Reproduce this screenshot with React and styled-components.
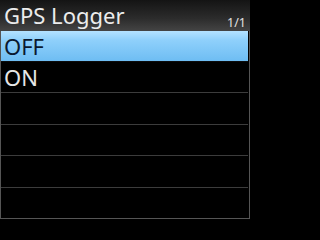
import React from 'react';
import styled, { createGlobalStyle } from 'styled-components';

const GlobalStyle = createGlobalStyle`
    html, body {
        margin: 0;
        padding: 0;
        background: #000;
    }
    body {
        font-family: 'Noto Sans', 'Open Sans', sans-serif;
    }
`;

const Screen = styled.div`
    width: 250px;
    height: 219px;
    background: #000;
    display: flex;
    flex-direction: column;
    overflow: hidden;
`;

const TitleBar = styled.div`
    height: 31px;
    display: flex;
    align-items: flex-end;
    justify-content: space-between;
    padding: 0 4px 0 4px;
    box-sizing: border-box;
    background: linear-gradient(#141414, #2c2c2c 60%, #444 100%);
`;

const Title = styled.div`
    font-size: 22px;
    line-height: 22px;
    color: #ececec;
    padding-bottom: 5px;
`;

const PageCount = styled.div`
    font-size: 12.5px;
    line-height: 12px;
    color: #e0e0e0;
    padding-bottom: 2px;
`;

const List = styled.div`
    flex: 1;
    display: flex;
    flex-direction: column;
    border-left: 1px solid #555;
    border-right: 1px solid #555;
    border-bottom: 1px solid #555;
    padding-right: 1px;
`;

// rows are 31px with a 1px rule, the picked one is the blue bar
const Row = styled.div`
    height: ${props => props.$h}px;
    box-sizing: border-box;
    display: flex;
    align-items: center;
    padding-left: 3px;
    font-size: 22px;
    color: ${props => props.$selected ? '#0a1930' : '#e6e6e6'};
    background: ${props => props.$selected
        ? 'linear-gradient(#b4e2ff, #8fd0fb 30%, #6ebdf3 100%)'
        : 'transparent'};
    border-bottom: 1px solid ${props => props.$selected ? '#0c0c0c' : '#3c3c3c'};
    &:last-child {
        border-bottom: none;
    }
`;

const rows = [
    { label: 'OFF', h: 31, selected: true },
    { label: 'ON', h: 31 },
    { label: '', h: 32 },
    { label: '', h: 31 },
    { label: '', h: 32 },
    { label: '', h: 30 },
];

export default function App() {
    return (
        <>
            <GlobalStyle />
            <Screen>
                <TitleBar>
                    <Title>GPS Logger</Title>
                    <PageCount>1/1</PageCount>
                </TitleBar>
                <List>
                    {rows.map((r, i) => (
                        <Row key={i} $h={r.h} $selected={r.selected}>{r.label}</Row>
                    ))}
                </List>
            </Screen>
        </>
    );
}
